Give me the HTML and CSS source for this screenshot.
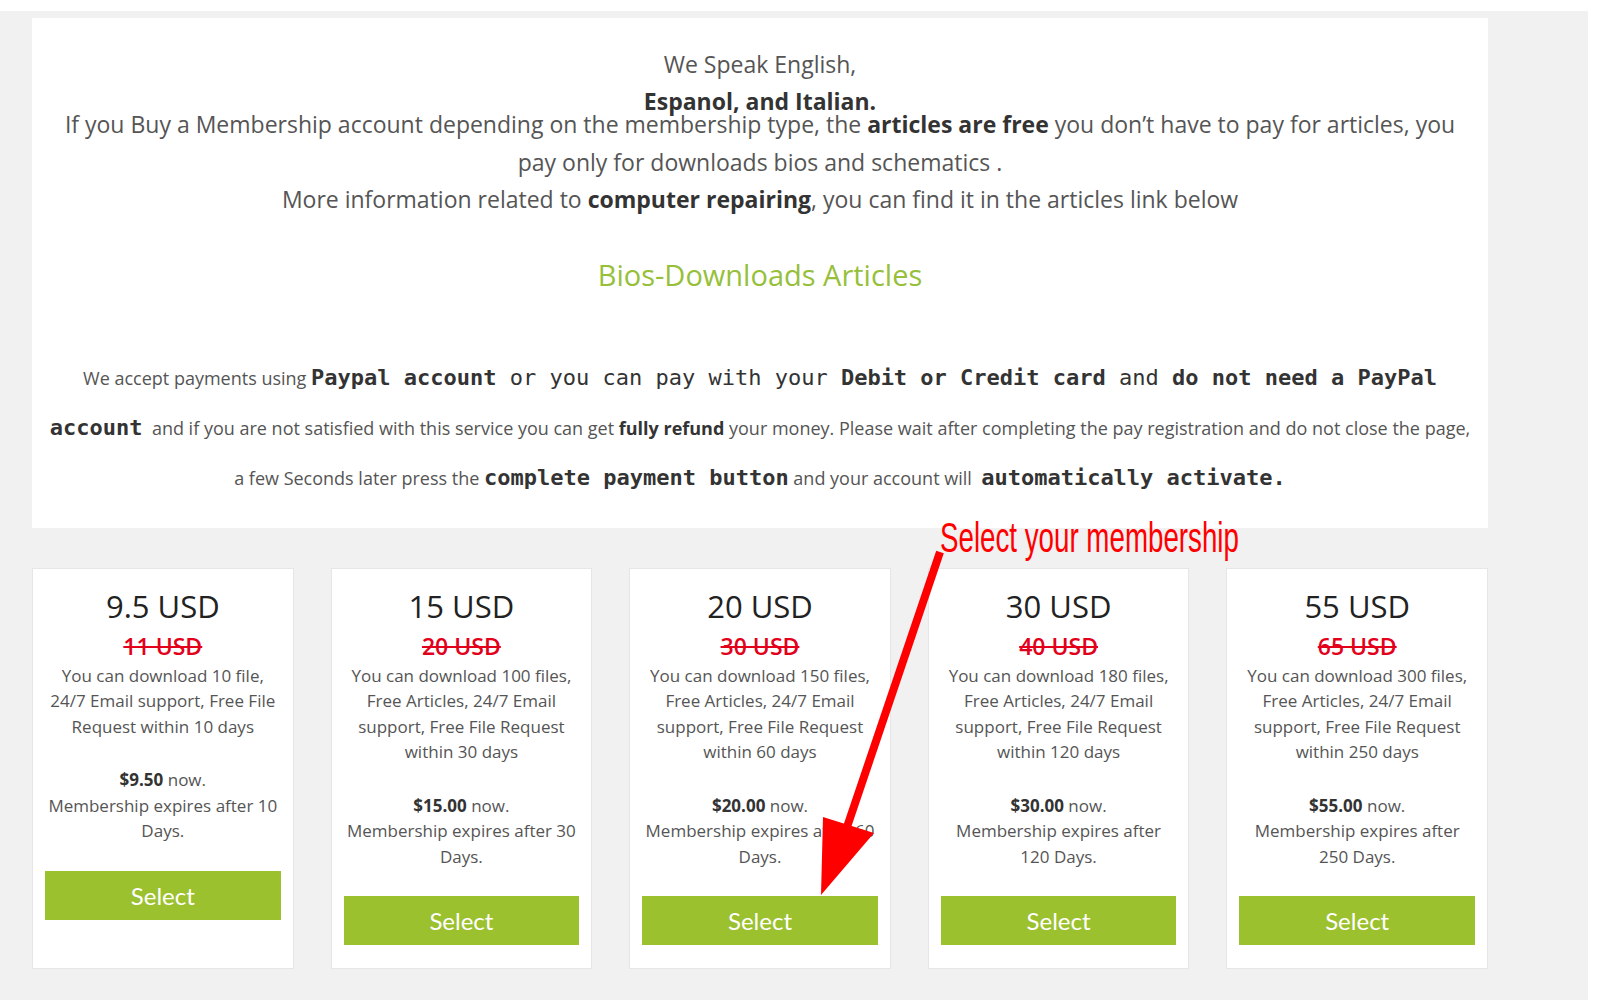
FILE: index.html
```html
<!DOCTYPE html>
<html lang="en">
  <head>
    <meta charset="UTF-8" />
    <meta name="viewport" content="width=device-width, initial-scale=1.0" />
    <title>Membership</title>
    <link rel="stylesheet" href="styles.css">
  </head>
  <body>
    <div class="page">
      <div class="info">
        <div class="speak">
          We Speak English,<br />
          <strong>Espanol, and Italian.</strong>
        </div>
        <p class="lead">
          If you Buy a Membership account depending on the membership type, the
          <strong>articles are free</strong> you don’t have to pay for articles, you
          pay only for downloads bios and schematics .<br />
          More information related to <strong>computer repairing</strong>, you can
          find it in the articles link below
        </p>

        <h2 class="articles"><a href="#">Bios-Downloads Articles</a></h2>

        <p class="payment">
          We accept payments using <code><b>Paypal account</b> or you can pay with
          your <b>Debit or Credit card</b> and <b>do not need a PayPal
          account</b></code>&nbsp; and if you are not satisfied with this service you
          can get <strong>fully refund</strong> your money. Please wait after
          completing the pay registration and do not close the page, a few Seconds
          later press the <code><b>complete payment button</b></code> and your
          account will&nbsp; <code><b>automatically activate.</b></code>
        </p>
      </div>

      <div class="plans">
        <div class="plan">
          <h3 class="plan-price">9.5 USD</h3>
          <div class="plan-old">11 USD</div>
          <div class="plan-info">
            <p>You can download 10 file, 24/7 Email support, Free File Request within 10 days</p>
            <p class="plan-now"><strong>$9.50</strong> now.<br />Membership expires after 10 Days.</p>
          </div>
          <a href="#" class="btn-select">Select</a>
        </div>

        <div class="plan">
          <h3 class="plan-price">15 USD</h3>
          <div class="plan-old">20 USD</div>
          <div class="plan-info">
            <p>You can download 100 files, Free Articles, 24/7 Email support, Free File Request within 30 days</p>
            <p class="plan-now"><strong>$15.00</strong> now.<br />Membership expires after 30 Days.</p>
          </div>
          <a href="#" class="btn-select">Select</a>
        </div>

        <div class="plan">
          <h3 class="plan-price">20 USD</h3>
          <div class="plan-old">30 USD</div>
          <div class="plan-info">
            <p>You can download 150 files, Free Articles, 24/7 Email support, Free File Request within 60 days</p>
            <p class="plan-now"><strong>$20.00</strong> now.<br />Membership expires after 60 Days.</p>
          </div>
          <a href="#" class="btn-select">Select</a>
        </div>

        <div class="plan">
          <h3 class="plan-price">30 USD</h3>
          <div class="plan-old">40 USD</div>
          <div class="plan-info">
            <p>You can download 180 files, Free Articles, 24/7 Email support, Free File Request within 120 days</p>
            <p class="plan-now"><strong>$30.00</strong> now.<br />Membership expires after 120 Days.</p>
          </div>
          <a href="#" class="btn-select">Select</a>
        </div>

        <div class="plan">
          <h3 class="plan-price">55 USD</h3>
          <div class="plan-old">65 USD</div>
          <div class="plan-info">
            <p>You can download 300 files, Free Articles, 24/7 Email support, Free File Request within 250 days</p>
            <p class="plan-now"><strong>$55.00</strong> now.<br />Membership expires after 250 Days.</p>
          </div>
          <a href="#" class="btn-select">Select</a>
        </div>
      </div>

      <!-- annotation drawn over the plans -->
      <div class="callout">Select your membership</div>
      <svg class="callout-arrow" width="160" height="370" viewBox="0 0 160 370">
        <line x1="140" y1="12" x2="46" y2="290" stroke="#ff0000" stroke-width="8" />
        <polygon points="21,355 23,277 74,293" fill="#ff0000" />
      </svg>
    </div>
  </body>
</html>
```

FILE: styles.css
```css
:root {
  --text: #555555;
  --dark: #333333;
  --green: #9cc12f;
  --link: #96c03a;
  --red: #e2001a;
  --grey: #f1f1f1;
  --border: #e6e6e6;
}

* {
  box-sizing: border-box;
}

html,
body {
  margin: 0;
  padding: 0;
  background-color: #ffffff;
  font-family: "Open Sans", "Noto Sans", sans-serif;
  color: var(--text);
}

.page {
  position: relative;
  width: 1588px;
  min-height: 989px;
  margin-top: 11px;
  padding: 7px 0 0 32px;
  background-color: var(--grey);
}

.info {
  width: 1456px;
  background-color: #ffffff;
  padding: 28px 12px 25px;
  text-align: center;
}

.speak {
  font-size: 23px;
  line-height: 37px;
  margin-bottom: -14px;
}

.speak strong,
.lead strong,
.payment strong {
  color: var(--dark);
  font-weight: 700;
}

.lead {
  margin: 0;
  font-size: 23px;
  line-height: 37.5px;
}

.articles {
  margin: 36px 0 0;
  font-size: 29px;
  font-weight: 400;
  line-height: 40px;
}

.articles a {
  color: var(--link);
  text-decoration: none;
}

.payment {
  margin: 58px 0 0;
  font-size: 18px;
  line-height: 50px;
}

.payment code {
  font-family: "DejaVu Sans Mono", "Liberation Mono", monospace;
  font-size: 22px;
  color: var(--dark);
}

.plans {
  width: 1456px;
  margin-top: 40px;
  display: grid;
  grid-template-columns: repeat(5, 1fr);
  gap: 37px;
}

.plan {
  height: 401px;
  background-color: #ffffff;
  border: 1px solid var(--border);
  padding: 17px 12px 0;
  text-align: center;
}

.plan-price {
  margin: 0;
  font-size: 31px;
  font-weight: 400;
  line-height: 40px;
  color: #222222;
}

.plan-old {
  margin-top: 4px;
  font-size: 23px;
  font-weight: 600;
  line-height: 32px;
  color: var(--red);
  text-decoration: line-through;
}

.plan-info {
  margin-top: 1px;
  padding: 0 3px;
  font-size: 17px;
  line-height: 25.5px;
}

.plan-info p {
  margin: 0;
}

.plan-info .plan-now {
  margin-top: 28px;
}

.plan-now strong {
  color: var(--dark);
}

.btn-select {
  display: block;
  margin-top: 27px;
  height: 49px;
  line-height: 49px;
  background-color: var(--green);
  color: #ffffff;
  font-family: Lato, "Open Sans", sans-serif;
  font-size: 24px;
  text-decoration: none;
}

.callout {
  position: absolute;
  left: 940px;
  top: 506px;
  font-family: "Liberation Sans", sans-serif;
  font-size: 42px;
  line-height: 42px;
  color: #ff0000;
  white-space: nowrap;
  transform: scaleX(0.66);
  transform-origin: left top;
}

.callout-arrow {
  position: absolute;
  left: 800px;
  top: 529px;
}
```
